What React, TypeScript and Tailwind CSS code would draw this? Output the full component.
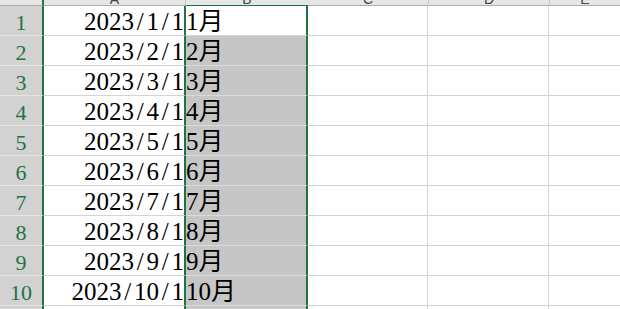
const GREEN = 'border-[#217346]'

const ROWS = Array.from({ length: 11 }, (_, i) => ({
  n: i + 1,
  date: `2023/${i + 1}/1`,
  month: `${i + 1}月`,
}))

const serif = { fontFamily: '"Liberation Serif", "Noto Sans CJK SC", serif' }

function DateText({ text }: { text: string }) {
  return (
    <span className="text-[25px] leading-[25px] text-black whitespace-nowrap">
      {text.split('/').map((part, i) => (
        <span key={i}>
          {i > 0 && <span className="inline-block w-[12.5px] text-center">/</span>}
          {part}
        </span>
      ))}
    </span>
  )
}

export default function App() {
  return (
    <div className="w-[620px] h-[309px] overflow-hidden bg-white" style={serif}>
      {/* Column header strip (mostly scrolled out of view) */}
      <div className="flex h-[6px]">
        <div className={`w-[44px] shrink-0 bg-[#e6e6e6] border-b border-b-[#ababab] border-r-2 ${GREEN}`} />
        {[
          { l: 'A', cls: 'w-[142px] border-r border-r-[#c8c8c8] border-b border-b-[#ababab]' },
          { l: 'B', cls: 'w-[122px] border-b border-b-[#217346]' },
          { l: 'C', cls: 'w-[121px] border-r border-r-[#c8c8c8] border-b border-b-[#ababab]' },
          { l: 'D', cls: 'w-[121px] border-r border-r-[#c8c8c8] border-b border-b-[#ababab]' },
          { l: 'E', cls: 'flex-1 border-b border-b-[#ababab]' },
        ].map((h) => (
          <div
            key={h.l}
            className={`${h.cls} shrink-0 bg-[#e6e6e6] overflow-hidden flex items-end justify-center`}
          >
            <span
              className="text-[14px] leading-[14px] mb-[-1px] text-[#444]"
              style={{ fontFamily: '"Liberation Sans", sans-serif' }}
            >
              {h.l}
            </span>
          </div>
        ))}
      </div>

      {/* Data rows */}
      {ROWS.map((r) => (
        <div key={r.n} className="flex h-[30px]">
          <div
            className={`w-[44px] shrink-0 bg-[#d2d2d2] border-b border-b-[#e4e4e4] border-r-2 ${GREEN} flex items-end justify-center pb-[1px]`}
          >
            <span className="text-[22px] leading-[22px] text-[#217346]">{r.n}</span>
          </div>
          <div
            className={`w-[142px] shrink-0 border-b border-b-[#d4d4d4] border-r-2 ${GREEN} flex items-end justify-end pb-[1px]`}
          >
            <DateText text={r.date} />
          </div>
          <div
            className={`w-[122px] shrink-0 border-r-2 ${GREEN} border-b flex items-end pb-[1px] ${
              r.n === 1 ? 'bg-white border-b-[#d4d4d4]' : 'bg-[#c6c6c6] border-b-[#dadada]'
            }`}
          >
            <span className="text-[25px] leading-[25px] text-black">{r.month}</span>
          </div>
          <div className="w-[120px] shrink-0 border-b border-b-[#d4d4d4] border-r border-r-[#d4d4d4]" />
          <div className="w-[121px] shrink-0 border-b border-b-[#d4d4d4] border-r border-r-[#d4d4d4]" />
          <div className="flex-1 border-b border-b-[#d4d4d4]" />
        </div>
      ))}
    </div>
  )
}
